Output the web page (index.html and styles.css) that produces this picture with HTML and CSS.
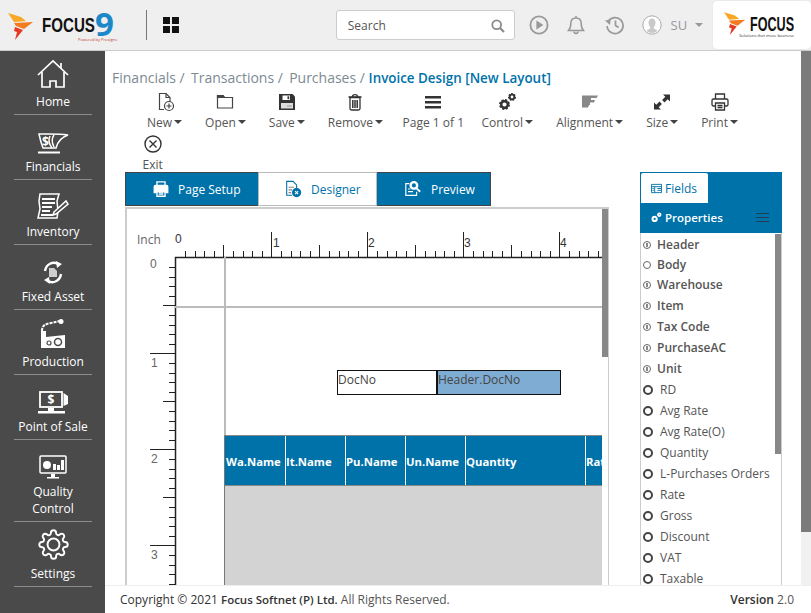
FILE: index.html
```html
<!DOCTYPE html>
<html lang="en">
<head>
    <meta charset="UTF-8">
    <title>Invoice Design</title>
    <link rel="stylesheet" href="styles.css">
</head>
<body>
<div class="app">
    <header class="topbar">
        <div class="brand">
            <svg class="brand-mark" viewBox="0 0 26 28">
                <path fill="#f9a825" d="M0 0 L13 4 L18 8 L6 9 Z"/>
                <path fill="#f47b20" d="M6 10 L25 9 L16 16 L8 13 Z"/>
                <path fill="#e53a23" d="M7 14 L15 17 L7 27 L9 19 L6 18 Z"/>
            </svg>
            <span class="brand-name">FOCUS</span>
            <span class="brand-nine">9</span>
            <span class="brand-powered">Powered by Prosigns</span>
        </div>
        <div class="top-divider"></div>
        <svg class="grid-icon" viewBox="0 0 16 16">
            <path fill="#111" d="M0 0h7v7H0zM9 0h7v7H9zM0 9h7v7H0zM9 9h7v7H9z"/>
        </svg>
        <div class="search">
            <span>Search</span>
            <svg class="search-icon" viewBox="0 0 14 14" fill="none" stroke="#8a8a8a" stroke-width="1.8">
                <circle cx="5.7" cy="5.7" r="4.4"/>
                <path d="M9 9l4 4" stroke-width="2.2"/>
            </svg>
        </div>
        <svg class="top-icon icon-play" viewBox="0 0 20 20" fill="none" stroke="#999" stroke-width="1.8">
            <circle cx="10" cy="10" r="8.6"/>
            <path fill="#999" stroke="none" d="M7.4 5.6 L14.4 10 L7.4 14.4 Z"/>
        </svg>
        <svg class="top-icon icon-bell" viewBox="0 0 20 20" fill="none" stroke="#999" stroke-width="1.5">
            <path d="M2.5 15.5 C4.5 13.5 4.8 12 4.8 8.5 C4.8 5 7 3 10 3 C13 3 15.2 5 15.2 8.5 C15.2 12 15.5 13.5 17.5 15.5 Z"/>
            <path d="M8 16.5 C8 19 12 19 12 16.5 M10 1v2"/>
        </svg>
        <svg class="top-icon icon-history" viewBox="0 0 20 20" fill="none" stroke="#999" stroke-width="1.7">
            <path d="M3.2 6.5 A8 8 0 1 1 2.1 11"/>
            <path fill="#999" stroke="none" d="M0 5.5 L5.6 4.4 L5 10 Z"/>
            <path d="M10.5 5.5v5l3.2 2"/>
        </svg>
        <svg class="top-icon icon-avatar" viewBox="0 0 20 20">
            <circle cx="10" cy="10" r="9.2" fill="#fff" stroke="#aaa" stroke-width="1"/>
            <path fill="#c9c9c9" d="M10 3.5c2.2 0 3.5 1.8 3.5 4s-1 4-1.8 4.8v1l3.8 2.4a8 8 0 0 1-11 0l3.8-2.4v-1C7.500 11.500 6.500 9.700 6.500 7.500s1.300-4 3.500-4z"/>
        </svg>
        <span class="top-user">SU</span>
        <span class="top-caret"></span>
        <div class="company-card">
            <svg class="company-mark" viewBox="0 0 26 28">
                <path fill="#f9a825" d="M0 0 L13 4 L18 8 L6 9 Z"/>
                <path fill="#f47b20" d="M6 10 L25 9 L16 16 L8 13 Z"/>
                <path fill="#e53a23" d="M7 14 L15 17 L7 27 L9 19 L6 18 Z"/>
            </svg>
            <span class="company-name">FOCUS</span>
            <span class="company-tag">Solutions that move business</span>
        </div>
    </header>

    <div class="below-top">
        <nav class="sidebar">
            <a class="nav-item nav-first">
                <svg class="nav-icon" width="32" height="30" viewBox="0 0 32 30" fill="none" stroke="#fff" stroke-width="1.7">
                    <path d="M1 16 L16 2 L31 16"/>
                    <path d="M5 13 V28 H13 V22 H19 V28 H27 V13"/>
                    <path d="M24 4 V9"/>
                </svg>
                <span>Home</span>
            </a>
            <a class="nav-item">
                <svg class="nav-icon" width="32" height="23" viewBox="0 0 32 23" fill="none" stroke="#fff" stroke-width="1.5">
                    <path d="M2 3 H12 C18 3 24 3 31 4 C25 6 21 9 19 17 H6 C4 12 3 8 2 3 Z"/>
                    <path d="M13 5 C11 9 12 13 15 17 M17 4 C14 8 15 12 17 16"/>
                    <path d="M1 21.500 H23" stroke-width="2"/>
                    <text class="nav-glyph" x="5" y="15">$</text>
                </svg>
                <span>Financials</span>
            </a>
            <a class="nav-item">
                <svg class="nav-icon" width="32" height="26" viewBox="0 0 32 26" fill="none" stroke="#fff" stroke-width="1.5">
                    <path d="M3 1 H22 L20 8 L21 18 L20 25 H1 L3 16 L2 8 Z"/>
                    <path d="M5 6 H18 M5 10 H18 M5 14 H15 M5 18 H13 M4 22 H16" stroke-width="2"/>
                    <path d="M17 19 L29 8 L31 11 L19 21 L16 22 Z" fill="#4a4a4a"/>
                </svg>
                <span>Inventory</span>
            </a>
            <a class="nav-item">
                <svg class="nav-icon" width="20" height="23" viewBox="0 0 20 23" fill="none" stroke="#fff" stroke-width="2.4">
                    <path d="M15 3 C10 0 3 3 2 10"/>
                    <path d="M5 20 C10 23 17 20 18 13"/>
                    <path fill="#fff" stroke="none" d="M13 0 L19 3 L14 7 Z M7 23 L1 19 L6 16 Z"/>
                    <path fill="#cfcfcf" stroke="none" d="M6 7 H11 L14 10 V16 H6 Z"/>
                </svg>
                <span>Fixed Asset</span>
            </a>
            <a class="nav-item">
                <svg class="nav-icon" width="26" height="30" viewBox="0 0 26 30">
                    <path fill="none" stroke="#fff" stroke-width="2" stroke-dasharray="3 1" d="M2 12 C2 6 6 5 11 4 L20 2"/>
                    <circle cx="21" cy="2.500" r="2.500" fill="#fff"/>
                    <path fill="#fff" d="M1 12 H6 V18 L25 16 V29 H1 Z"/>
                    <circle cx="18" cy="23" r="3.500" fill="none" stroke="#4a4a4a" stroke-width="1.500"/>
                    <circle cx="9" cy="24" r="2" fill="none" stroke="#4a4a4a" stroke-width="1.200"/>
                </svg>
                <span>Production</span>
            </a>
            <a class="nav-item">
                <svg class="nav-icon" width="32" height="23" viewBox="0 0 32 23" fill="none" stroke="#fff" stroke-width="1.800">
                    <rect x="3" y="1" width="22" height="15"/>
                    <path fill="#fff" stroke="none" d="M26.500 2 L31 5 V13 L26.500 15 Z M11 17 H17 V20 H11 Z M1 20 H28 V22.500 H1 Z"/>
                    <text class="nav-glyph" x="10.500" y="13">$</text>
                </svg>
                <span>Point of Sale</span>
            </a>
            <a class="nav-item nav-tall">
                <svg class="nav-icon" width="28" height="24" viewBox="0 0 28 24" fill="none" stroke="#fff" stroke-width="1.500">
                    <rect x="1" y="1" width="26" height="17" rx="1"/>
                    <circle cx="8" cy="10" r="4" fill="#fff" stroke="none"/>
                    <path fill="#fff" stroke="none" d="M14 9h3v6h-3zM18 10h3v5h-3zM22 5h3v10h-3zM12 19h4v3h-4zM8 22h12v1.500H8z"/>
                </svg>
                <span>Quality<br>Control</span>
            </a>
            <a class="nav-item nav-settings">
                <svg class="nav-icon" width="31" height="31" viewBox="0 0 24 24" fill="none" stroke="#fff" stroke-width="1.500">
                    <circle cx="12" cy="12" r="4.600"/>
                    <path d="M19.400 15a1.650 1.650 0 0 0 .33 1.820l.06.06a2 2 0 0 1 0 2.830 2 2 0 0 1-2.830 0l-.06-.06a1.650 1.650 0 0 0-1.820-.33 1.650 1.650 0 0 0-1 1.510V21a2 2 0 0 1-2 2 2 2 0 0 1-2-2v-.09A1.650 1.650 0 0 0 9 19.400a1.650 1.650 0 0 0-1.820.33l-.06.06a2 2 0 0 1-2.830 0 2 2 0 0 1 0-2.830l.06-.06a1.650 1.650 0 0 0 .33-1.820 1.650 1.650 0 0 0-1.510-1H3a2 2 0 0 1-2-2 2 2 0 0 1 2-2h.09A1.650 1.650 0 0 0 4.600 9a1.650 1.650 0 0 0-.33-1.820l-.06-.06a2 2 0 0 1 0-2.830 2 2 0 0 1 2.830 0l.06.06a1.650 1.650 0 0 0 1.820.33H9a1.650 1.650 0 0 0 1-1.510V3a2 2 0 0 1 2-2 2 2 0 0 1 2 2v.09a1.650 1.650 0 0 0 1 1.510 1.650 1.650 0 0 0 1.820-.33l.06-.06a2 2 0 0 1 2.830 0 2 2 0 0 1 0 2.830l-.06.06a1.650 1.650 0 0 0-.33 1.820V9a1.650 1.650 0 0 0 1.510 1H21a2 2 0 0 1 2 2 2 2 0 0 1-2 2h-.09a1.650 1.650 0 0 0-1.510 1z"/>
                </svg>
                <span>Settings</span>
            </a>
        </nav>

        <main class="main">
            <div class="main-body">
                <div class="content">
                    <div class="crumbs">
                        <span class="crumb">Financials /</span>
                        <span class="crumb">Transactions /</span>
                        <span class="crumb crumb-last">Purchases /</span>
                        <span class="crumb-title">Invoice Design [New Layout]</span>
                    </div>

                    <div class="toolbar">
                        <div class="tool">
                            <svg class="tool-icon" viewBox="0 0 20 20" fill="none" stroke="#444" stroke-width="1.200">
                                <path d="M9 17.500H4.500V1.500H11L15 5.500V9"/>
                                <path d="M11 1.500V5.500H15"/>
                                <circle cx="14" cy="14" r="4.500"/>
                                <path d="M14 11.500V16.500M11.500 14H16.500"/>
                            </svg>
                            <span class="tool-label">New<i class="caret"></i></span>
                        </div>
                        <div class="tool">
                            <svg class="tool-icon" viewBox="0 0 20 20" fill="none" stroke="#444" stroke-width="1.200">
                                <path d="M2.500 16V3.500H8L9.500 5.500H17.500V16Z"/>
                                <path d="M2.500 3.500H8L9.500 5.500H2.500Z" fill="#444"/>
                            </svg>
                            <span class="tool-label">Open<i class="caret"></i></span>
                        </div>
                        <div class="tool">
                            <svg class="tool-icon" viewBox="0 0 20 20">
                                <path fill="#333" d="M2 2H15.500L18 4.500V18H2Z"/>
                                <path fill="#fff" d="M5.500 3.500H13V8H5.500Z"/>
                                <path fill="#333" d="M10.500 4.300H12.200V7.200H10.500Z"/>
                                <path fill="#ddd" d="M4 11H16V16.500H4Z"/>
                                <path fill="#999" d="M10 13.500H15V14.500H10Z"/>
                            </svg>
                            <span class="tool-label">Save<i class="caret"></i></span>
                        </div>
                        <div class="tool">
                            <svg class="tool-icon" viewBox="0 0 20 20" fill="none" stroke="#333" stroke-width="1.300">
                                <path d="M3.500 5H16.500M7.500 4.500C7.500 2 12.500 2 12.500 4.500"/>
                                <path d="M5 5.500H15V16.500A1.500 1.500 0 0 1 13.500 18H6.500A1.500 1.500 0 0 1 5 16.500Z"/>
                                <path d="M7.800 8V16M10 8V16M12.200 8V16" stroke-width="1.500"/>
                            </svg>
                            <span class="tool-label">Remove<i class="caret"></i></span>
                        </div>
                        <div class="tool tool-page">
                            <svg class="tool-icon" viewBox="0 0 20 20">
                                <path fill="#333" d="M2 4H18V6.500H2ZM2 9H18V11.500H2ZM2 14H18V16.500H2Z"/>
                            </svg>
                            <span class="tool-label">Page 1 of 1</span>
                        </div>
                        <div class="tool">
                            <svg class="tool-icon" viewBox="0 0 20 20" fill="none" stroke="#333">
                                <circle cx="7.500" cy="12.500" r="4.200" stroke-width="2.500" stroke-dasharray="2 1.300"/>
                                <circle cx="7.500" cy="12.500" r="3.300" stroke-width="2.400"/>
                                <circle cx="15" cy="5" r="3" stroke-width="2" stroke-dasharray="1.500 1.100"/>
                                <circle cx="15" cy="5" r="2.300" stroke-width="1.800"/>
                            </svg>
                            <span class="tool-label">Control<i class="caret"></i></span>
                        </div>
                        <div class="tool">
                            <svg class="tool-icon" viewBox="0 0 20 20">
                                <path fill="#888" d="M2 3.500H18L16.500 6H11V8H15L14 10.500H10V13H9L8 15.500H2Z"/>
                            </svg>
                            <span class="tool-label">Alignment<i class="caret"></i></span>
                        </div>
                        <div class="tool">
                            <svg class="tool-icon" viewBox="0 0 20 20">
                                <path fill="#333" d="M11 2.500H18V9.500L15.700 7.200L12.500 10.400L10.100 8L13.300 4.800ZM9 17.500H2V10.500L4.300 12.800L7.500 9.600L9.900 12L6.700 15.200Z"/>
                            </svg>
                            <span class="tool-label">Size<i class="caret"></i></span>
                        </div>
                        <div class="tool">
                            <svg class="tool-icon" viewBox="0 0 20 20" fill="none" stroke="#333" stroke-width="1.300">
                                <path d="M5.500 7V2H14.500V7"/>
                                <path d="M5.500 14H3.500A1.500 1.500 0 0 1 2 12.500V8.500A1.500 1.500 0 0 1 3.500 7H16.500A1.500 1.500 0 0 1 18 8.500V12.500A1.500 1.500 0 0 1 16.500 14H14.500"/>
                                <path d="M5.500 11H14.500V18H5.500ZM7.500 13.500H12.500M7.500 15.500H12.500"/>
                            </svg>
                            <span class="tool-label">Print<i class="caret"></i></span>
                        </div>
                    </div>
                    <div class="toolbar toolbar-second">
                        <div class="tool">
                            <svg class="tool-icon" viewBox="0 0 20 20" fill="none" stroke="#333" stroke-width="1.400">
                                <circle cx="10" cy="10" r="8"/>
                                <path d="M6.500 6.500L13.500 13.500M13.500 6.500L6.500 13.500"/>
                            </svg>
                            <span class="tool-label">Exit</span>
                        </div>
                    </div>

                    <div class="workspace">
                        <div class="design">
                            <div class="tabs">
                                <div class="tab tab-setup">
                                    <svg class="tab-icon" viewBox="0 0 20 20" fill="none" stroke="#fff" stroke-width="1.500">
                                        <path d="M5.500 6V2H14.500V6"/>
                                        <path d="M5 14H2.500V7.500A1.500 1.500 0 0 1 4 6H16A1.500 1.500 0 0 1 17.500 7.500V14H15" fill="#fff"/>
                                        <path d="M5.500 11H14.500V18H5.500ZM7.500 13.500H12.500M7.500 15.500H12.500"/>
                                    </svg>
                                    Page Setup
                                </div>
                                <div class="tab tab-active">
                                    <svg class="tab-icon" viewBox="0 0 20 20" fill="none" stroke="#0072aa" stroke-width="1.200">
                                        <path d="M9 17H3V1.500H10L14 5.500V9"/>
                                        <path d="M5 8H11M5 11H9M5 14H8" stroke="#888"/>
                                        <circle cx="14" cy="14" r="4.500" fill="#0072aa"/>
                                        <path d="M12.300 12.300L15.700 15.700M15.700 12.300L12.300 15.700" stroke="#fff"/>
                                    </svg>
                                    Designer
                                </div>
                                <div class="tab tab-preview">
                                    <svg class="tab-icon" viewBox="0 0 20 20" fill="none" stroke="#fff" stroke-width="1.300">
                                        <path d="M6 4H2V17H14V13"/>
                                        <path d="M4.500 10H7M4.500 13H10"/>
                                        <circle cx="11" cy="6" r="4.300" fill="#fff"/>
                                        <circle cx="11" cy="6" r="2.300" fill="#0072aa" stroke="none"/>
                                        <path d="M14 9.500L18 13" stroke-width="2"/>
                                    </svg>
                                    Preview
                                </div>
                            </div>
                            <div class="frame">
                                <svg class="ruler" width="475" height="376" viewBox="127 209 475 376">
                                    <defs>
                                        <path id="h-tenths" d="M10.500 -6V0M20.500 -6V0M29.500 -6V0M39.500 -6V0M48.500 -12V0M58.500 -6V0M68.500 -6V0M77.500 -6V0M87.500 -6V0"/>
                                        <path id="h-major" d="M.5 -25V0"/>
                                        <path id="v-tenths" d="M-6 10.500H0M-6 20.500H0M-6 29.500H0M-6 39.500H0M-12 48.500H0M-6 58.500H0M-6 68.500H0M-6 77.500H0M-6 87.500H0"/>
                                        <path id="v-major" d="M-25 .5H0"/>
                                    </defs>
                                    <g stroke="#222" fill="none">
                                        <use href="#h-tenths" x="175" y="257"/>
                                        <use href="#h-major" x="271" y="257"/>
                                        <use href="#h-tenths" x="271" y="257"/>
                                        <use href="#h-major" x="367" y="257"/>
                                        <use href="#h-tenths" x="367" y="257"/>
                                        <use href="#h-major" x="463" y="257"/>
                                        <use href="#h-tenths" x="463" y="257"/>
                                        <use href="#h-major" x="559" y="257"/>
                                        <use href="#h-tenths" x="559" y="257"/>
                                        <use href="#v-tenths" x="175" y="257"/>
                                        <use href="#v-major" x="175" y="353"/>
                                        <use href="#v-tenths" x="175" y="353"/>
                                        <use href="#v-major" x="175" y="449"/>
                                        <use href="#v-tenths" x="175" y="449"/>
                                        <use href="#v-major" x="175" y="545"/>
                                        <use href="#v-tenths" x="175" y="545"/>
                                        <path d="M175 257.500H602M175.500 257V585" stroke-width="1.500"/>
                                    </g>
                                    <path d="M175 307H602M225 257V435" stroke="#bbb" stroke-width="2" fill="none"/>
                                    <text class="ruler-unit" x="137" y="244">Inch</text>
                                    <g class="ruler-num">
                                        <text x="175" y="243">0</text>
                                        <text x="273" y="247">1</text>
                                        <text x="368" y="247">2</text>
                                        <text x="464" y="247">3</text>
                                        <text x="560" y="247">4</text>
                                    </g>
                                    <g class="ruler-num ruler-num-v">
                                        <text x="150" y="267.500">0</text>
                                        <text x="151" y="367">1</text>
                                        <text x="151" y="463">2</text>
                                        <text x="151" y="559">3</text>
                                    </g>
                                </svg>
                                <div class="field field-caption">DocNo</div>
                                <div class="field field-value">Header.DocNo</div>
                                <div class="sheet-table">
                                    <div class="sheet-head">
                                        <div class="sheet-col sheet-col-first">Wa.Name</div>
                                        <div class="sheet-col">It.Name</div>
                                        <div class="sheet-col">Pu.Name</div>
                                        <div class="sheet-col">Un.Name</div>
                                        <div class="sheet-col sheet-col-wide">Quantity</div>
                                        <div class="sheet-col">Rate</div>
                                    </div>
                                    <div class="sheet-rows"></div>
                                </div>
                                <div class="frame-scroll"></div>
                            </div>
                        </div>

                        <aside class="panel">
                            <div class="panel-head">
                                <div class="panel-tab">
                                    <svg class="panel-icon" viewBox="0 0 12 12" fill="none" stroke="#0072aa" stroke-width="1">
                                        <path d="M.5 1.500H11.500V10.500H.5ZM.5 4H11.500M4 4V10.500M7 6H11M7 8H11M1.500 6H3M1.500 8H3"/>
                                    </svg>
                                    Fields
                                </div>
                                <div class="panel-props">
                                    <svg class="panel-icon" viewBox="0 0 12 12" fill="none" stroke="#fff">
                                        <circle cx="4" cy="7.500" r="2.300" stroke-width="2.200"/>
                                        <circle cx="9" cy="3" r="1.500" stroke-width="1.800"/>
                                    </svg>
                                    <span class="props-title">Properties</span>
                                    <span class="props-menu"></span>
                                </div>
                            </div>
                            <div class="panel-list">
                                <div class="prop prop-group"><i class="prop-mark"></i>Header</div>
                                <div class="prop prop-group prop-short"><i class="prop-mark prop-empty"></i>Body</div>
                                <div class="prop prop-group"><i class="prop-mark"></i>Warehouse</div>
                                <div class="prop prop-group"><i class="prop-mark"></i>Item</div>
                                <div class="prop prop-group"><i class="prop-mark"></i>Tax Code</div>
                                <div class="prop prop-group"><i class="prop-mark"></i>PurchaseAC</div>
                                <div class="prop prop-group"><i class="prop-mark"></i>Unit</div>
                                <div class="prop"><i class="prop-ring"></i>RD</div>
                                <div class="prop"><i class="prop-ring"></i>Avg Rate</div>
                                <div class="prop"><i class="prop-ring"></i>Avg Rate(O)</div>
                                <div class="prop"><i class="prop-ring"></i>Quantity</div>
                                <div class="prop"><i class="prop-ring"></i>L-Purchases Orders</div>
                                <div class="prop"><i class="prop-ring"></i>Rate</div>
                                <div class="prop"><i class="prop-ring"></i>Gross</div>
                                <div class="prop"><i class="prop-ring"></i>Discount</div>
                                <div class="prop"><i class="prop-ring"></i>VAT</div>
                                <div class="prop"><i class="prop-ring"></i>Taxable</div>
                                <div class="panel-scroll"></div>
                            </div>
                        </aside>
                    </div>
                </div>
                <div class="page-scroll"><div class="page-thumb"></div></div>
            </div>
            <footer class="footer">
                <div><span class="footer-dark">Copyright © 2021</span> <b class="footer-brand">Focus Softnet (P) Ltd.</b> All Rights Reserved.</div>
                <div><b>Version</b> 2.0</div>
            </footer>
        </main>
    </div>
</div>
</body>
</html>
```

FILE: styles.css
```css
* {
    box-sizing: border-box;
}

html, body {
    margin: 0;
    height: 100%;
    overflow: hidden;
}

body {
    font-family: "Open Sans", Arial, sans-serif;
    font-size: 12px;
    color: #555;
    background-color: #fff;
}

.app {
    display: flex;
    flex-direction: column;
    height: 100vh;
}

/* top bar */
.topbar {
    display: flex;
    align-items: center;
    flex: none;
    height: 51px;
    background-color: #efefef;
    border-bottom: 1px solid #ccc;
}

.brand {
    position: relative;
    display: flex;
    align-items: center;
    width: 146px;
    height: 50px;
    padding-left: 8px;
}

.brand-mark {
    width: 26px;
    height: 28px;
    margin-top: 3px;
}

.brand-name {
    display: inline-block;
    margin-left: 8px;
    font-family: "Liberation Sans", sans-serif;
    font-size: 21px;
    font-weight: 700;
    color: #111;
    transform: scaleX(0.72);
    transform-origin: left center;
}

.brand-nine {
    position: absolute;
    left: 95px;
    top: 12px;
    font-size: 33px;
    font-weight: 700;
    line-height: 24px;
    color: #1c87c9;
}

.brand-powered {
    position: absolute;
    left: 78px;
    top: 37px;
    font-size: 4px;
    line-height: 5px;
    color: #c0392b;
}

.top-divider {
    width: 1px;
    height: 30px;
    background-color: #777;
}

.grid-icon {
    width: 16px;
    height: 16px;
    margin-left: 16px;
}

.search {
    display: flex;
    align-items: center;
    justify-content: space-between;
    width: 179px;
    height: 30px;
    margin-left: 157px;
    padding: 0 9px 0 11px;
    font-size: 12px;
    color: #555;
    background-color: #fff;
    border: 1px solid #ccc;
    border-radius: 3px;
}

.search-icon {
    width: 14px;
    height: 14px;
    margin-top: 2px;
}

.top-icon {
    flex: none;
    width: 20px;
    height: 20px;
}

.icon-play {
    margin-left: 14px;
}

.icon-bell {
    margin-left: 17px;
}

.icon-history {
    margin-left: 19px;
}

.icon-avatar {
    margin-left: 17px;
}

.top-user {
    margin-left: 9px;
    font-size: 13px;
    color: #999;
}

.top-caret {
    width: 0;
    height: 0;
    margin-left: 8px;
    border-top: 4px solid #999;
    border-left: 4px solid transparent;
    border-right: 4px solid transparent;
}

.company-card {
    position: relative;
    width: 98px;
    height: 48px;
    margin-left: 10px;
    background-color: #fff;
    border-radius: 4px;
    box-shadow: 0 0 1px #ccc;
}

.company-mark {
    position: absolute;
    left: 11px;
    top: 11px;
    width: 22px;
    height: 24px;
}

.company-name {
    position: absolute;
    left: 37px;
    top: 15px;
    font-family: "Liberation Sans", sans-serif;
    font-size: 21px;
    font-weight: 700;
    line-height: 16px;
    color: #111;
    transform: scaleX(0.6);
    transform-origin: left center;
}

.company-tag {
    position: absolute;
    left: 26px;
    top: 32px;
    font-size: 4px;
    line-height: 5px;
    white-space: nowrap;
    color: #333;
}

/* sidebar */
.below-top {
    display: flex;
    flex: 1;
    min-height: 0;
}

.sidebar {
    flex: none;
    width: 105px;
    padding: 0 13px 0 14px;
    background-color: #4a4a4a;
}

.nav-item {
    display: flex;
    flex-direction: column;
    align-items: center;
    justify-content: flex-end;
    height: 65px;
    padding-bottom: 4px;
    font-size: 12px;
    line-height: 17px;
    text-align: center;
    white-space: nowrap;
    color: #fff;
    border-bottom: 1px solid #8c8c8c;
}

.nav-first {
    height: 64px;
}

.nav-tall {
    height: 82px;
}

.nav-icon {
    flex: none;
    margin-bottom: 4px;
}

.nav-settings .nav-icon {
    margin-bottom: 5px;
}

.nav-glyph {
    font-family: "Open Sans", sans-serif;
    font-size: 12px;
    font-weight: 700;
    fill: #fff;
    stroke: none;
}

/* main area */
.main {
    display: flex;
    flex-direction: column;
    flex: 1;
    min-width: 0;
}

.main-body {
    display: flex;
    flex: 1;
    min-height: 0;
}

.content {
    flex: 1;
    min-width: 0;
    padding: 17px 0 0 7px;
    overflow: hidden;
}

.crumbs {
    height: 21px;
    font-size: 14px;
    line-height: 20px;
    white-space: nowrap;
    color: #7d8a92;
}

.crumb {
    margin-right: 2.6px;
}

.crumb-last {
    margin-right: 0;
}

.crumb-title {
    font-size: 13.4px;
    font-weight: 600;
    color: #0072aa;
}

.toolbar {
    display: flex;
    margin-top: 3px;
    padding-left: 23.5px;
    white-space: nowrap;
}

.toolbar-second {
    margin-top: 3px;
    padding-left: 19px;
}

.tool {
    display: flex;
    flex-direction: column;
    align-items: center;
    padding: 0 11.5px;
}

.tool-page {
    padding: 0 6px 0 8px;
}

.tool-icon {
    width: 20px;
    height: 20px;
    margin-bottom: 1px;
}

.tool-label {
    display: flex;
    align-items: center;
    height: 18px;
    font-size: 12px;
    color: #555;
}

.caret {
    width: 0;
    height: 0;
    margin-left: 2px;
    border-top: 4px solid #444;
    border-left: 4px solid transparent;
    border-right: 4px solid transparent;
}

/* designer */
.workspace {
    display: flex;
    margin-top: -1px;
    padding-left: 13px;
}

.design {
    flex: none;
    width: 484px;
}

.tabs {
    display: flex;
    height: 34px;
}

.tab {
    display: flex;
    align-items: center;
    font-size: 12px;
    color: #fff;
    background-color: #0072aa;
    border: 1px solid #444;
    border-width: 1px 0 1px 1px;
}

.tab-setup {
    width: 133px;
    gap: 8px;
    padding-left: 26px;
}

.tab-active {
    width: 119px;
    gap: 9px;
    padding-left: 25px;
    color: #0072aa;
    background-color: #fff;
    border: 1px solid #bbb;
}

.tab-preview {
    width: 114px;
    gap: 9px;
    padding-left: 27px;
    border-width: 1px 1px 1px 0;
}

.tab-icon {
    flex: none;
    width: 18px;
    height: 18px;
}

.frame {
    position: relative;
    height: 378px;
    margin-top: 1px;
    overflow: hidden;
    background-color: #fff;
    border: 2px solid #ccc;
    border-width: 2px 1px 0 2px;
}

.ruler {
    position: absolute;
    left: 0;
    top: 0;
}

.ruler-unit {
    font-family: "Open Sans", sans-serif;
    font-size: 12px;
    fill: #666;
}

.ruler-num {
    font-family: "Liberation Sans", sans-serif;
    font-size: 12px;
    fill: #333;
}

.ruler-num-v {
    fill: #666;
}

.field {
    position: absolute;
    top: 161px;
    height: 25px;
    font-size: 12px;
    line-height: 18px;
    color: #444;
    border: 1px solid #111;
}

.field-caption {
    left: 210px;
    width: 100px;
}

.field-value {
    left: 310px;
    width: 124px;
    background-color: #7facd3;
}

.sheet-table {
    position: absolute;
    left: 97px;
    top: 226px;
    width: 378px;
    bottom: 0;
    overflow: hidden;
    border-left: 1px solid #777;
    border-top: 1px solid #888;
}

.sheet-head {
    display: flex;
    height: 50px;
    overflow: hidden;
    background-color: #0072aa;
    border-bottom: 1px solid #888;
}

.sheet-col {
    flex: none;
    width: 60px;
    font-size: 11.3px;
    font-weight: 700;
    line-height: 52px;
    white-space: nowrap;
    color: #fff;
    border-right: 1px solid #fff;
}

.sheet-col-first {
    width: 61px;
    padding-left: 1px;
}

.sheet-col-wide {
    width: 120px;
}

.sheet-rows {
    height: 100px;
    background-color: #d3d3d3;
}

.frame-scroll {
    position: absolute;
    right: 0;
    top: 0;
    width: 6px;
    height: 148px;
    background-color: #888;
}

/* right panel */
.panel {
    flex: none;
    width: 142px;
    margin-left: 31px;
}

.panel-head {
    height: 61px;
    padding: 1px 0 0 1px;
    background-color: #0072aa;
}

.panel-tab {
    display: flex;
    align-items: center;
    gap: 3px;
    width: 67px;
    height: 30px;
    padding-left: 10px;
    font-size: 12px;
    color: #0072aa;
    background-color: #fff;
    border-radius: 2px 2px 0 0;
}

.panel-icon {
    flex: none;
    width: 11px;
    height: 11px;
}

.panel-props {
    display: flex;
    align-items: center;
    gap: 3px;
    height: 30px;
    padding: 0 0 2px 10px;
    font-size: 11.5px;
    font-weight: 600;
    color: #fff;
}

.props-menu {
    width: 13px;
    height: 9px;
    margin-left: auto;
    margin-right: 13px;
    border-top: 1px solid #1f3f52;
    border-bottom: 1px solid #1f3f52;
    background: linear-gradient(#1f3f52, #1f3f52) center / 100% 1px no-repeat;
}

.panel-list {
    position: relative;
    height: 352px;
    padding-top: 1px;
    overflow: hidden;
    border-left: 1px solid #ccc;
    border-right: 1px solid #ccc;
}

.prop {
    display: flex;
    align-items: center;
    height: 21px;
    padding-left: 1px;
    font-size: 12px;
    white-space: nowrap;
    color: #555;
}

.prop-group {
    font-weight: 600;
    color: #555;
}

.prop-short {
    height: 19px;
}

.prop-mark {
    position: relative;
    flex: none;
    width: 8px;
    height: 8px;
    margin-right: 6px;
    margin-left: 1px;
    border: 1px solid #666;
    border-radius: 50%;
}

.prop-mark::after {
    content: "";
    position: absolute;
    left: 2px;
    top: 1px;
    width: 2px;
    height: 4px;
    background-color: #888;
}

.prop-empty::after {
    display: none;
}

.prop-ring {
    flex: none;
    width: 10px;
    height: 10px;
    margin-left: 1px;
    margin-right: 7px;
    border: 2px solid #444;
    border-radius: 50%;
}

.panel-scroll {
    position: absolute;
    right: 0;
    top: 1px;
    width: 6px;
    height: 220px;
    background-color: #888;
}

.page-scroll {
    flex: none;
    width: 10px;
    background-color: #f1f1f1;
}

.page-thumb {
    height: 481px;
    background-color: #7b7b7b;
}

.footer {
    display: flex;
    flex: none;
    justify-content: space-between;
    align-items: center;
    height: 28px;
    padding: 0 17px 0 15px;
    font-size: 12px;
    color: #555;
    background-color: #fff;
    border-top: 1px solid #eee;
}

.footer-dark {
    color: #333;
}

.footer b {
    font-weight: 600;
    color: #333;
}

.footer .footer-brand {
    font-size: 11.5px;
}
```
